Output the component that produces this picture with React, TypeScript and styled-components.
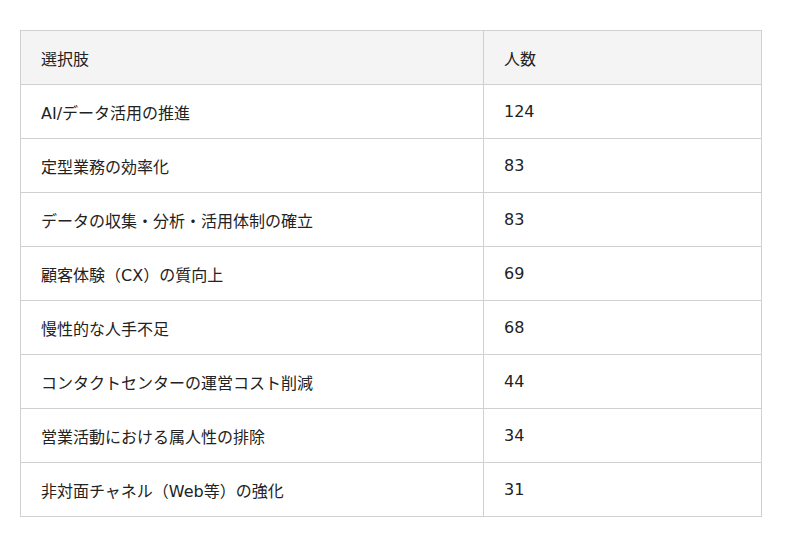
import React from "react";
import styled, { createGlobalStyle } from "styled-components";

const Global = createGlobalStyle`
  html, body { margin: 0; padding: 0; background: #fff; }
  body { font-family: "DejaVu Sans", "Noto Sans CJK JP", sans-serif; color: #222; }
`;

const Page = styled.div`
  padding: 30px 20px;
`;

const Table = styled.table`
  width: 742px;
  border-collapse: collapse;
  font-size: 16px;
`;

const HeadCell = styled.th<{ $w?: number }>`
  height: 54px;
  padding: 0 20px;
  text-align: left;
  font-weight: normal;
  background: #f4f4f4;
  border: 1px solid #d0d0d0;
  width: ${(p) => (p.$w ? `${p.$w}px` : "auto")};
  box-sizing: border-box;
`;

const Cell = styled.td`
  height: 54px;
  padding: 0 20px;
  border: 1px solid #d0d0d0;
  box-sizing: border-box;
`;

const rows: [string, number][] = [
  ["AI/データ活用の推進", 124],
  ["定型業務の効率化", 83],
  ["データの収集・分析・活用体制の確立", 83],
  ["顧客体験（CX）の質向上", 69],
  ["慢性的な人手不足", 68],
  ["コンタクトセンターの運営コスト削減", 44],
  ["営業活動における属人性の排除", 34],
  ["非対面チャネル（Web等）の強化", 31],
];

export default function App() {
  return (
    <Page>
      <Global />
      <Table>
        <thead>
          <tr>
            <HeadCell $w={463}>選択肢</HeadCell>
            <HeadCell>人数</HeadCell>
          </tr>
        </thead>
        <tbody>
          {rows.map(([label, n]) => (
            <tr key={label}>
              <Cell>{label}</Cell>
              <Cell>{n}</Cell>
            </tr>
          ))}
        </tbody>
      </Table>
    </Page>
  );
}
